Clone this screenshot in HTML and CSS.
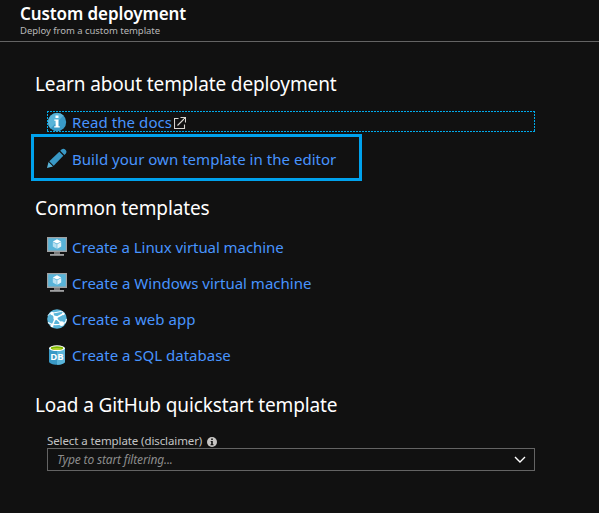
FILE: index.html
```html
<!DOCTYPE html>
<html lang="en">
<head>
<meta charset="utf-8">
<title>Custom deployment</title>
<link rel="stylesheet" href="styles.css">
</head>
<body>
<header class="blade-header">
  <h1 class="title"><span>Custom deployment</span></h1>
  <p class="subtitle"><span>Deploy from a custom template</span></p>
</header>
<main class="content">
  <section class="learn">
    <h2 class="heading h-learn"><span>Learn about template deployment</span></h2>
    <a class="link focused">
      <svg class="icon" viewBox="0 0 20 20"><circle cx="10" cy="10" r="9.2" fill="#3999c6"/><path d="M3.500 16.500A9.200 9.200 0 0 1 16.500 3.500Z" fill="#59b4d9"/><path d="M8.500 3.500h3v2.600h-3zM7.300 7.500h4.200v6.700h1.300v1.400H7.200v-1.400h1.400V8.800H7.300z" fill="#fff"/></svg>
      <span class="l1">Read the docs</span>
      <svg class="external" viewBox="0 0 12 12" fill="none" stroke="#d8d5d0"><path d="M4.500 1.500h-4v10h10v-4M3.500 8.500l7.500-7.500M6.500.5h5v5" stroke-width="1.100"/></svg>
    </a>
    <a class="link boxed">
      <svg class="icon" viewBox="0 0 20 20"><path d="M0 20l1.500-6 4.500 4.500z" fill="#59b4d9"/><path d="M2.300 13.300L12.300 3.700l4 4L6.700 17.700z" fill="#3999c6"/><path d="M13.200 2.800l1.300-1.400a3.100 3.100 0 0 1 4.400 4.200l-1.500 1.400z" fill="#3999c6"/></svg>
      <span class="l2">Build your own template in the editor</span>
    </a>
  </section>
  <section class="common">
    <h2 class="heading h-common"><span>Common templates</span></h2>
    <a class="link">
      <svg class="icon" viewBox="0 0 20 20"><path d="M0 0h20v15H0z" fill="#a0a1a2"/><path d="M1.200 1.200h17.600v12.300H1.200z" fill="#59b4d9"/><path d="M7 15h6v2.500H7z" fill="#7a7a7a"/><path d="M3 17h14v1.800H3z" fill="#a0a1a2"/><path d="M10 2.200l4.200 2.200L10 6.600 5.800 4.400z" fill="#fff"/><path d="M5.800 5.100l3.900 2.200v4.500L5.800 9.600z" fill="#b8e0f1"/><path d="M14.200 5.100l-3.900 2.200v4.500l3.900-2.200z" fill="#e3f3fa"/></svg>
      <span class="l3">Create a Linux virtual machine</span>
    </a>
    <a class="link">
      <svg class="icon" viewBox="0 0 20 20"><path d="M0 0h20v15H0z" fill="#a0a1a2"/><path d="M1.200 1.200h17.600v12.300H1.200z" fill="#59b4d9"/><path d="M7 15h6v2.500H7z" fill="#7a7a7a"/><path d="M3 17h14v1.800H3z" fill="#a0a1a2"/><path d="M10 2.200l4.200 2.200L10 6.600 5.800 4.400z" fill="#fff"/><path d="M5.800 5.100l3.900 2.200v4.500L5.800 9.600z" fill="#b8e0f1"/><path d="M14.200 5.100l-3.900 2.200v4.500l3.900-2.200z" fill="#e3f3fa"/></svg>
      <span class="l4">Create a Windows virtual machine</span>
    </a>
    <a class="link">
      <svg class="icon" viewBox="0 0 20 20"><circle cx="10" cy="10" r="9.800" fill="#59b4d9"/><g fill="none" stroke="#fff"><path d="M5 4.500L8.500 9l6 5.500M8.500 9L17 4.500M8.500 9L5 17" stroke-width="1.500"/><path d="M1 6.500C3 3.500 6 4 9 3.500S14 2 16 3" stroke-width="1"/><path d="M1 13.500c3 2.500 8 2.500 13.500 1.500S18.500 12 19.500 10" stroke-width="1.100"/></g><g fill="#fff"><circle cx="5" cy="4.500" r="1.700"/><circle cx="8.500" cy="9" r="2.200"/><circle cx="14.700" cy="14.700" r="2.400"/><circle cx="5" cy="16.800" r="1.500"/><circle cx="16.300" cy="4.800" r="1.400"/></g></svg>
      <span class="l5">Create a web app</span>
    </a>
    <a class="link">
      <svg class="icon" viewBox="0 0 20 20"><path d="M2 3v13.500c0 1.800 3.600 3.200 8 3.200s8-1.400 8-3.200V3z" fill="#3999c6"/><path d="M10 3h8v13.500c0 1.800-3.600 3.200-8 3.200z" fill="#59b4d9"/><ellipse cx="10" cy="3.200" rx="8" ry="2.900" fill="#fff"/><ellipse cx="10" cy="3.200" rx="6.300" ry="1.900" fill="#7fba00"/><ellipse cx="10" cy="4" rx="4.500" ry="1" fill="#b8d432"/><text class="db" x="10" y="15" text-anchor="middle">DB</text></svg>
      <span class="l6">Create a SQL database</span>
    </a>
  </section>
  <section class="load">
    <h2 class="heading h-load"><span>Load a GitHub quickstart template</span></h2>
    <div class="label"><span>Select a template (disclaimer)</span>
      <svg class="info" viewBox="0 0 10 10"><circle cx="5" cy="5" r="5" fill="#c8c6c4"/><path d="M4.200 1.500h1.600V3H4.200zM3.700 4h2.100v3.300h.7v1h-3v-1h.7V5h-.5z" fill="#111"/></svg>
    </div>
    <div class="field"><span>Type to start filtering...</span>
      <svg class="chevron" viewBox="0 0 12 7"><path d="M1 1l5 5 5-5" fill="none" stroke="#fff" stroke-width="1.400"/></svg>
    </div>
  </section>
</main>
</body>
</html>
```
FILE: styles.css
```css
* { box-sizing: border-box; }
body {
  margin: 0;
  height: 513px;
  overflow: hidden;
  background: #111;
  color: #fff;
  font-family: "Noto Sans", "Open Sans", sans-serif;
  white-space: nowrap;
}
h1, h2, p { margin: 0; font-weight: 400; }
.blade-header { height: 42px; padding: 3px 20px 0; border-bottom: 1px solid #646464; }
.title { font-size: 17px; line-height: 22px; font-weight: 600; letter-spacing: -0.1px; }
.subtitle { font-size: 9.5px; line-height: 12px; color: #b8b8b8; letter-spacing: -0.03px; }
.content { padding: 29px 64px 0 35px; }
.heading { font-size: 19px; line-height: 26px; height: 26px; letter-spacing: -0.12px; }
.link {
  display: flex;
  align-items: center;
  height: 36px;
  margin-left: 12px;
  color: #4894fe;
  font-size: 15px;
}
.icon { flex: none; width: 20px; height: 20px; margin-right: 5px; }
.focused {
  height: 21px;
  margin-top: 14px;
  background:
    repeating-linear-gradient(90deg, #00abec 0 2px, transparent 2px 3px) top / 100% 1px no-repeat,
    repeating-linear-gradient(90deg, #00abec 0 2px, transparent 2px 3px) bottom / 100% 1px no-repeat,
    repeating-linear-gradient(#00abec 0 2px, transparent 2px 3px) left / 1px 100% no-repeat,
    repeating-linear-gradient(#00abec 0 2px, transparent 2px 3px) right / 1px 100% no-repeat;
}
.l1 { letter-spacing: 0.08px; }
.l2 { letter-spacing: 0.03px; position: relative; top: 1px; }
.l3 { letter-spacing: -0.06px; }
.l5 { letter-spacing: 0.06px; }
.external { width: 12px; height: 12px; margin: 2px 0 0 2px; }
.boxed { width: 331px; height: 47px; margin: 2px 0 0 -4px; padding-left: 13px; border: 3px solid #00a2ed; }
.common { padding-top: 14px; }
.h-common { margin-bottom: 8px; }
.load { padding-top: 19px; }
.db { font: 700 9.5px "Open Sans", sans-serif; fill: #fff; }
.label {
  display: flex;
  align-items: center;
  height: 16px;
  margin: 14px 0 0 12px;
  color: #c4c4c4;
  font-size: 11.5px;
  letter-spacing: -0.1px;
}
.info { width: 10px; height: 10px; margin: 3px 0 0 5px; }
.field {
  display: flex;
  align-items: center;
  justify-content: space-between;
  height: 23px;
  margin: 0 0 0 12px;
  padding: 0 8px 0 9px;
  border: 1px solid #646464;
  color: #8c8c8c;
  font-size: 12px;
  font-style: italic;
  letter-spacing: -0.17px;
}
.chevron { width: 12px; height: 7px; }
```
